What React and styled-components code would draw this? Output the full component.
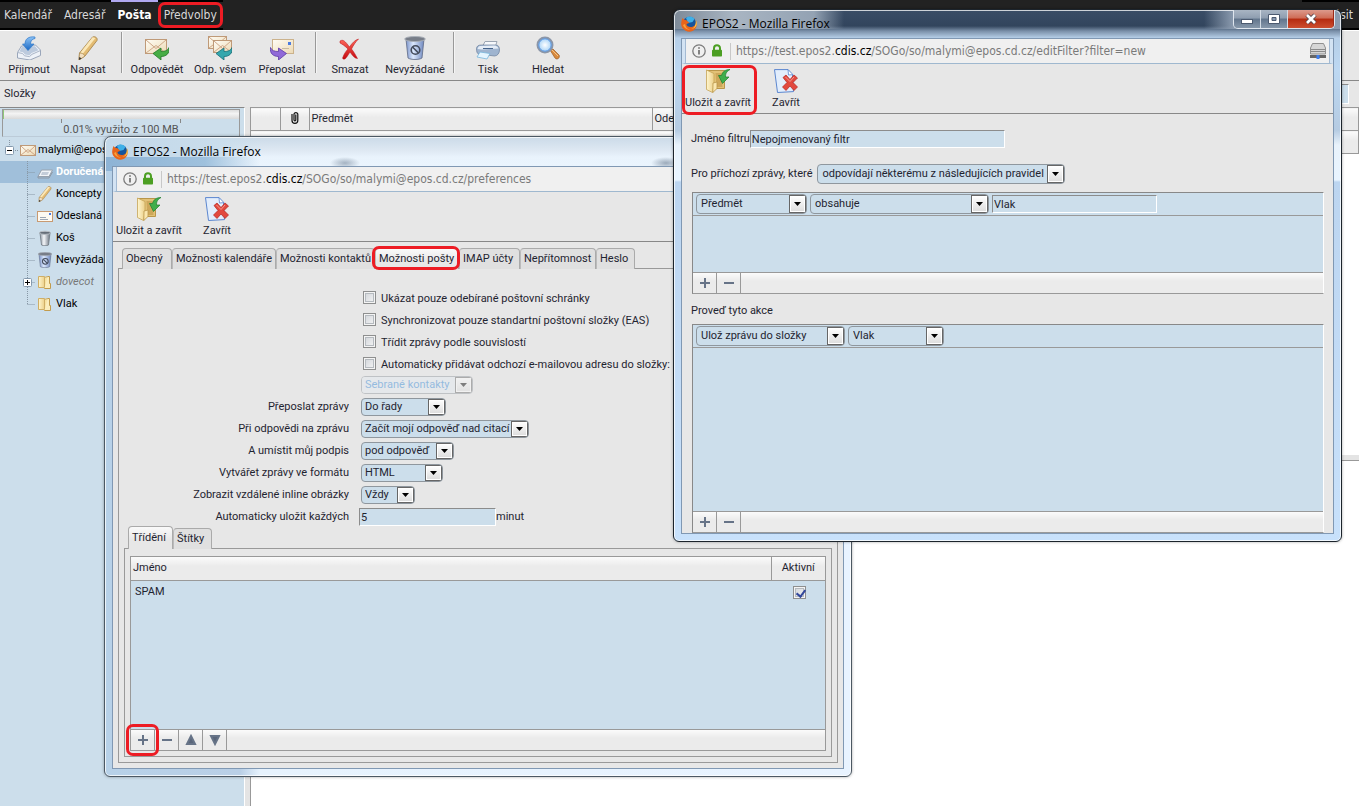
import styled, { createGlobalStyle, css } from "styled-components";

const GlobalStyle = createGlobalStyle`
* {
    box-sizing: border-box;
}
body {
    margin: 0;
    background: #fff;
    color: #1f2430;
    font-family: Roboto, sans-serif;
    font-size: 11px;
    line-height: 14px;
    overflow: hidden;
}
button, input, select {
    font: inherit;
    color: inherit;
    margin: 0;
    padding: 0;
}
`;

const redMark = css`
position: relative;

&::after {
    content: "";
    position: absolute;
    inset: ${props => props.$inset || "0"};
    border: 3px solid #ed1c24;
    border-radius: 7px;
    pointer-events: none;
}
`;

const bevel = css`
background: linear-gradient(#fbfbfb, #ebebeb 40%, #ebebeb);
`;

const sunken = css`
border: 1px solid;
border-color: #8c8c8c #fff #fff #8c8c8c;
background: #ccdeeb;
`;

/* ---------- main mail page ---------- */

const Page = styled.div`
position: relative;
display: flex;
flex-direction: column;
height: 100vh;
overflow: hidden;
`;

const TopBar = styled.nav`
display: flex;
justify-content: space-between;
height: 30px;
background: #222;
`;

const TopGroup = styled.div`
display: flex;
`;

const TopLink = styled.a`
display: block;
height: 30px;
padding: 0 6px;
border-top: 2px solid ${props => props.$active ? "#b0a8f0" : "#000"};
border-bottom: 2px solid #000;
color: ${props => props.$active ? "#fff" : "#d8d8d8"};
font-family: "DejaVu Sans Condensed", "DejaVu Sans", sans-serif;
font-stretch: condensed;
font-size: 12px;
font-weight: ${props => props.$active ? 700 : 400};
line-height: 27px;
text-decoration: none;
white-space: nowrap;

&:first-child {
    padding-left: 4px;
}
${props => props.$marked && redMark}
`;

const Toolbar = styled.div`
display: flex;
height: 50px;
border-bottom: 1px solid #888;
background: #e7e7e7;
`;

const MainToolbar = styled(Toolbar)`
height: 51px;
border-top: 1px solid #fff;
`;

const ToolButton = styled.button`
display: flex;
flex-direction: column;
align-items: center;
gap: 3px;
width: ${props => props.$width || 60}px;
padding-top: 5px;
border: none;
background: none;
white-space: nowrap;
cursor: pointer;
${props => props.$marked && redMark}
`;

const Separator = styled.div`
width: 2px;
height: 41px;
margin: 1px 3px 0;
border-left: 1px solid #999;
border-right: 1px solid #f5f5f5;
`;

const FolderBar = styled.div`
display: flex;
justify-content: space-between;
align-items: center;
height: 26px;
padding: 0 10px 0 4px;
background: #e7e7e7;
`;

const SearchInput = styled.input`
width: 180px;
height: 20px;
${sunken}
`;

const Content = styled.div`
display: flex;
flex: 1;
`;

const Sidebar = styled.aside`
width: 245px;
border-top: 1px solid #888;
border-right: 1px solid #fff;
background: #ccdeeb;
`;

const Splitter = styled.div`
width: 5px;
background: #e4e4e4;
`;

const Quota = styled.div`
margin: 1px 4px 0 2px;
height: 28px;
border: 1px solid #999;
border-bottom-color: #bccbd8;
color: #555;
text-align: center;
line-height: 13px;
`;

const QuotaBar = styled.div`
height: 9px;
border-left: 1px solid #8fc87a;
background: linear-gradient(#dcdcdc, #f4f4f4 40%, #d9d9d9);
`;

const QuotaTicks = styled.div`
display: flex;
justify-content: space-evenly;
height: 4px;

& > i {
    width: 1px;
    background: #888;
}
`;

const Tree = styled.ul`
margin: 2px 0 0;
padding: 0;
list-style: none;
`;

const TreeItem = styled.li`
display: flex;
align-items: center;
height: 22px;
padding-left: ${props => props.$root ? 5 : 23}px;
background: ${props => props.$selected ? "#a0bfda" : "none"};
`;

const TreeLink = styled.a`
display: flex;
align-items: center;
gap: ${props => props.$root ? 2 : 3}px;
color: ${props => props.$selected ? "#fff" : props.$muted ? "#777" : "#000"};
font-weight: ${props => props.$selected ? 700 : 400};
font-style: ${props => props.$muted ? "italic" : "normal"};
text-decoration: none;
white-space: nowrap;
`;

const ListArea = styled.main`
flex: 1;
display: flex;
flex-direction: column;
border-left: 1px solid #999;
background: #fff;
`;

const MessageTable = styled.table`
width: 100%;
table-layout: fixed;
border-collapse: collapse;

th {
    ${bevel}
    height: 23px;
    padding: 0 2px;
    border: 1px solid #999;
    border-left: none;
    font-weight: 400;
    text-align: left;
}
th:nth-child(2) {
    text-align: center;
}
`;

const MessageList = styled.div`
height: 301px;
`;

const ListSplitter = styled.div`
height: 6px;
border-bottom: 1px solid #999;
background: #e4e4e4;
`;

/* ---------- popup windows ---------- */

const darkGlass = `
linear-gradient(90deg, #7d8a98 0, #a9b5c2 60px, #93a2b3 140px, rgba(50, 69, 93, 0) 170px) 0 0 / 100% 19px no-repeat,
linear-gradient(90deg, rgba(50, 69, 93, 0) 530px, #8c9cb0 560px, #8c9cb0) 0 0 / 100% 19px no-repeat,
linear-gradient(#3a4d66, #32455d 16px, #7a8fa8 21px, #b6cfe8 28px, #bdd8f2 60px, #b5cbe2 120px, #e8f2fb 135px, #e8f4ff 170px, #bcd5f0 172px, #c8e1fb 100%)
`;

const lightGlass = `
radial-gradient(closest-side, rgba(60, 80, 105, 0.4), transparent) 225px 20px / 30px 12px no-repeat,
radial-gradient(closest-side, rgba(60, 80, 105, 0.45), transparent) 546px 20px / 30px 12px no-repeat,
linear-gradient(90deg, #c3d8e9 0, #c9ddec 110px, rgba(225, 236, 246, 0) 155px) 0 0 / 100% 20px no-repeat,
linear-gradient(90deg, #8db3d5 0, #9fc1dd 100px, rgba(225, 236, 246, 0) 155px) 0 20px / 100% 14px no-repeat,
linear-gradient(#cbdae8, #dfe9f3 14px, #e9f3fc 20px, #eaf4fd) 100px 0 / 100% 29px no-repeat,
linear-gradient(90deg, #b7d1e8 0, #b9cfe6 135px, #e6f2fd 155px, #e8f3ff 100%)
`;

const Window = styled.section`
position: absolute;
left: ${props => props.$left}px;
top: ${props => props.$top}px;
width: ${props => props.$width}px;
padding: 0 7px 7px;
border: 1px solid ${props => props.$dark ? "#1c242c" : "#4c5863"};
border-radius: 7px 7px 6px 6px;
box-shadow: inset 0 0 0 1px rgba(255, 255, 255, 0.75), 0 0 3px rgba(0, 0, 0, 0.35);
background: ${props => props.$dark ? darkGlass : lightGlass};
`;

const TitleBar = styled.header`
position: relative;
display: flex;
align-items: center;
gap: 5px;
height: ${props => props.$height}px;
color: #000;
font-family: "Open Sans", sans-serif;
font-size: 12px;
`;

const WindowControls = styled.div`
position: absolute;
top: 0;
right: -1px;
display: flex;
height: 19px;
border: 1px solid #dfe6ee;
border-top: none;
border-radius: 0 0 5px 5px;
overflow: hidden;
`;

const ControlButton = styled.button`
display: grid;
place-items: center;
width: ${props => props.$close ? 46 : 27}px;
border: none;
border-right: 1px solid ${props => props.$close ? "#9c2a18" : "#d3dbe4"};
background: ${props => props.$close
    ? "linear-gradient(#dc9a8c, #cf6b55 45%, #b52b10 50%, #cc4e30)"
    : "linear-gradient(#a9b5c3, #8e9db0 45%, #62758c 50%, #8798ab)"};
`;

const Client = styled.div`
border: 1px solid #8098b3;
background: #e7e7e7;
`;

const UrlBar = styled.div`
display: flex;
align-items: center;
height: 25px;
padding: 0 4px 0 7px;
border: solid #d3e3f3;
border-width: 0 3px;
border-bottom: 1px solid #9fb8cf;
box-shadow: inset 1px 0 #a3bad3, inset -1px 0 #a3bad3;
background: #f0f0f0;
color: #7a7a7a;
font-family: "DejaVu Sans Condensed", "DejaVu Sans", sans-serif;
font-stretch: condensed;
font-size: 12px;
white-space: nowrap;

b {
    color: #000;
    font-weight: 400;
}
svg:last-child {
    margin-left: auto;
}
`;

const UrlDivider = styled.span`
width: 1px;
height: 17px;
margin: 0 5px 0 4px;
background: #c8c8c8;
`;

const Tabs = styled.div`
display: flex;
align-items: flex-end;
padding: 6px 0 0 9px;
margin-bottom: -1px;
`;

const SubTabs = styled(Tabs)`
padding-top: 0;
`;

const Tab = styled.button`
height: ${props => props.$small && props.$active ? 23 : 21}px;
width: ${props => props.$width}px;
padding: 0 3px;
border: 1px solid #aaa;
border-bottom: none;
border-radius: 4px 4px 0 0;
background: ${props => props.$active ? "linear-gradient(#fafafa, #e7e7e7 60%)" : "#e0e0e0"};
text-align: left;
white-space: nowrap;
${props => props.$marked && redMark}

& + & {
    border-left-color: #bbb;
}
`;

const Panel = styled.div`
margin: 0 5px 5px;
padding: 17px 0 5px;
border: 1px solid #999;
`;

const Form = styled.form`
display: grid;
grid-template-columns: 230px 1fr;
grid-auto-rows: 22px;
align-items: center;
column-gap: 10px;
margin-bottom: -2px;
`;

const FormLabel = styled.label`
text-align: right;
`;

const FormField = styled.div`
grid-column: 2;
display: flex;
align-items: center;
padding-left: ${props => props.$indent || 0}px;
`;

const Check = styled.input`
appearance: none;
position: relative;
width: 13px;
height: 13px;
border: 1px solid #8e8f8f;
box-shadow: inset 0 0 0 1px #f4f4f4, inset 0 0 0 2px #b5babf;
background: linear-gradient(135deg, #cfd3d8, #f6f6f6);

&:checked::after {
    content: "";
    position: absolute;
    left: 4px;
    top: 1px;
    width: 4px;
    height: 7px;
    border: solid #32479b;
    border-width: 0 2px 2px 0;
    transform: rotate(38deg);
}
`;

const CheckLabel = styled.label`
padding: 3px 0 0 5px;
`;

const SelectBox = styled.span`
display: inline-grid;
width: ${props => props.$width}px;
height: ${props => props.$tall ? 20 : 18}px;
border: 1px solid #8f979e;
border-radius: 4px;
background: #ccdeeb;
opacity: ${props => props.$disabled ? 0.45 : 1};
overflow: hidden;
`;

const NativeSelect = styled.select`
grid-area: 1 / 1;
appearance: none;
width: 100%;
height: 100%;
padding: 0 17px 0 ${props => props.$tall ? 4 : 3}px;
border: none;
background: ${props => props.disabled ? "#e4ebf1" : "none"};
color: ${props => props.disabled ? "#2f86d6" : "#1f2430"};
opacity: 1;
outline: none;
`;

const SelectArrow = styled.span`
grid-area: 1 / 1;
justify-self: end;
display: grid;
place-items: center;
width: 17px;
border: 1px solid #666;
background: linear-gradient(#fff, #dcdcdc);
box-shadow: inset 0 0 0 1px #fff;
pointer-events: none;
`;

const TextInput = styled.input`
width: ${props => props.$width}px;
height: 18px;
padding: 0 1px;
outline: none;
${sunken}
`;

const InnerPanel = styled.div`
margin: 0 5px;
padding: 7px 5px 5px;
border: 1px solid #999;
`;

const ListBox = styled.div`
border: 1px solid #999;
background: #ccdeeb;
`;

const FilterTable = styled.table`
width: 100%;
border-collapse: collapse;
table-layout: fixed;

th {
    ${bevel}
    height: 23px;
    padding: 0 2px;
    border-bottom: 1px solid #999;
    font-weight: 400;
    text-align: left;
}
th:last-child {
    border-left: 1px solid #999;
    text-align: center;
}
td {
    height: 24px;
    padding: 0 4px;
}
td:last-child {
    padding: 4px 0 0 2px;
    text-align: center;
}
`;

const ListBody = styled.div`
height: 172px;
`;

const ListFooter = styled.div`
display: flex;
height: 21px;
border-top: 1px solid #999;
${bevel}
`;

const FooterButton = styled.button`
display: grid;
place-items: center;
width: 24px;
border: none;
border-right: 1px solid #999;
background: none;
${props => props.$marked && redMark}
`;

const FilterBody = styled.div`
padding: 16px 9px 0;
`;

const FilterRow = styled.div`
display: flex;
align-items: center;
gap: ${props => props.$gap}px;
margin-bottom: ${props => props.$bottom}px;
`;

const RuleBox = styled.div`
margin-left: 1px;
border: 1px solid;
border-color: #888 #fff #999 #888;
background: #ccdeeb;
`;

const RuleRow = styled.div`
display: flex;
align-items: center;
gap: 3px;
height: 23px;
padding: 0 3px;
border-bottom: 1px solid #999;
`;

const RuleSpace = styled.div`
height: ${props => props.$height}px;
`;

const ActionTitle = styled.h2`
margin: 10px 0 6px;
font-size: 11px;
font-weight: 400;
line-height: 14px;
`;

/* ---------- icons ---------- */

const Defs = () => (
    <svg width="0" height="0" style={{ position: "absolute" }} aria-hidden="true">
        <defs>
            <linearGradient id="blue" x2="0" y2="1"><stop stopColor="#8ec4f6" /><stop offset="1" stopColor="#1766c4" /></linearGradient>
            <linearGradient id="paper" x2="1" y2="1"><stop stopColor="#fffdf6" /><stop offset="1" stopColor="#ecd9b4" /></linearGradient>
            <linearGradient id="gold" x2="1" y2="0"><stop stopColor="#fff6cf" /><stop offset="1" stopColor="#ecd08a" /></linearGradient>
            <linearGradient id="steel" x2="1" y2="0"><stop stopColor="#8f98a3" /><stop offset=".4" stopColor="#f4f6f9" /><stop offset="1" stopColor="#69727e" /></linearGradient>
            <linearGradient id="bin" x2="1" y2="0"><stop stopColor="#7b93c9" /><stop offset=".4" stopColor="#dbe8fd" /><stop offset="1" stopColor="#6f88bf" /></linearGradient>
            <linearGradient id="red" x2="0" y2="1"><stop stopColor="#ff6a5c" /><stop offset="1" stopColor="#c4090f" /></linearGradient>
            <radialGradient id="lens"><stop stopColor="#fff" /><stop offset="1" stopColor="#9ccdf6" /></radialGradient>
        </defs>
    </svg>
);

const ReceiveIcon = () => (
    <svg width="24" height="24" viewBox="0 0 24 24">
        <path d="M4.500 10L.500 16.500V22L13 24l10.500-4.500V14L18.500 9z" fill="#eef2f8" stroke="#9aa6ba" />
        <path d="M5 10.500L2.500 15.500l3.500.700 2 2.300 4.500.700 2-2.200 7-2.700-3.500-4z" fill="#bccadd" />
        <path d="M.500 16.500l5 1 2 2.300 5 .8 2.500-2.300 8.500-3.800" fill="none" stroke="#aab5c7" />
        <path d="M18 1c-7-1-10 2.500-10 7H5.500l5.500 6.500L17 8h-3.500c0-3 1.500-5 4.500-5.500z" fill="url(#blue)" stroke="#2f78c8" strokeWidth=".7" />
    </svg>
);

const PencilIcon = ({ size = 24 }) => (
    <svg width={size} height={size} viewBox="0 0 24 24">
        <path d="M16.500 1c2-1 5.500.500 4.500 3.500L9 20l-6 4 .500-7z" fill="#e3bb72" stroke="#a07f48" strokeWidth=".8" />
        <path d="M16.500 1.200L4.500 16.500l2.300 1.200L19.500 2z" fill="#fbe8b8" />
        <path d="M3.500 17L3 24l6-4c-1-2-3-3-5.500-3z" fill="#f2dfc0" stroke="#a07f48" strokeWidth=".6" />
        <path d="M3.200 21L3 24l2.600-1.700z" fill="#333" />
    </svg>
);

const Envelope = ({ x = 0, y = 0, w = 22, h = 15 }) => (
    <g transform={`translate(${x} ${y})`}>
        <rect x=".5" y=".5" width={w - 1} height={h - 1} fill="url(#paper)" stroke="#bf9a78" />
        <path d={`M1 ${h - 1}L${w / 2} ${h / 2 - 1} ${w - 1} ${h - 1}M1 1l${w / 2 - 1} ${h / 2 + 1} ${w / 2 - 1}-${h / 2 + 1}`} fill="none" stroke="#cfa888" />
    </g>
);

const replyArrow = "M24 11.500c1 6-3 9-8 9v3.500l-8-6.500 8-5.500v3.500c4 0 7-1 8-4z";

const ReplyIcon = () => (
    <svg width="24" height="24" viewBox="0 0 24 24">
        <Envelope y={3} />
        <path d={replyArrow} fill="#47ad45" stroke="#24782a" strokeWidth=".8" />
    </svg>
);

const ReplyAllIcon = () => (
    <svg width="24" height="24" viewBox="0 0 24 24">
        <Envelope w={19} h={13} />
        <Envelope x={5} y={4} w={19} h={13} />
        <path d={replyArrow} fill="#35a7ad" stroke="#176d78" strokeWidth=".8" />
    </svg>
);

const ForwardIcon = () => (
    <svg width="24" height="24" viewBox="0 0 24 24">
        <rect x="2.500" y="3.500" width="21" height="14" fill="url(#paper)" stroke="#cbb28c" />
        <rect x="18" y="6" width="3" height="3" fill="#4b7be0" />
        <path d="M12 12.500h7" stroke="#c9b9a0" />
        <path d="M.500 11.500c-1 6 3 9 8 9V24l8-6.500-8-5.500v3.500c-4 0-7-1-8-4z" fill="#9069d8" stroke="#5b38a4" strokeWidth=".8" />
    </svg>
);

const DeleteIcon = () => (
    <svg width="24" height="24" viewBox="0 0 24 24">
        <path d="M2 5c3-2 5 0 9.500 6C14 7 17 4 20.500 3c-3 3-5 6-7 10 2.500 3 4 6 6 9.500-3 0-5-3-7.500-6.500-2 3-3 5-5 7-2 .5-3-.5-2-2 1-3 3-6 5-8C7 10 4 8 2 7z" fill="url(#red)" stroke="#b80d12" strokeWidth=".5" />
    </svg>
);

const JunkIcon = ({ size = 24 }) => (
    <svg width={size} height={size} viewBox="0 0 24 24">
        <path d="M3 3l2 19c3 2 11 2 14 0l2-19z" fill="url(#bin)" stroke="#5e6a85" strokeWidth=".8" />
        <ellipse cx="12" cy="3" rx="10.300" ry="2.500" fill="#777d88" stroke="#a9afb8" />
        <circle cx="12.500" cy="14" r="4.300" fill="none" stroke="#434b5c" strokeWidth="1.600" />
        <path d="M9.500 11l6 6" stroke="#434b5c" strokeWidth="1.600" />
    </svg>
);

const PrintIcon = () => (
    <svg width="24" height="24" viewBox="0 0 24 24">
        <path d="M9 5.500h12l-2 6H6z" fill="#f6f8fb" stroke="#9ba5b3" />
        <path d="M.500 13c0-3 2-4 5-4h14c3 0 4 2 4 5s-2 6-5 6L3 18c-2 0-2.500-3-2.500-5z" fill="#9fb4cf" stroke="#6b7f9c" strokeWidth=".7" />
        <path d="M4 10l14-.5c3 0 4 2 4.500 3L6 13.500 1.500 13c.500-2 1.500-3 2.500-3z" fill="#e4ecf6" />
        <path d="M7 12.500h10" stroke="#46648c" />
        <path d="M4 16l10 1.500-3 5.500-10-2z" fill="#e4f5ff" stroke="#78b6dc" strokeWidth=".8" />
    </svg>
);

const SearchIcon = () => (
    <svg width="24" height="24" viewBox="0 0 24 24">
        <path d="M14 14l3-1 6 6c1 1 0 4-2 4-1 0-1.500-.500-2-1z" fill="#d98a3e" stroke="#9c5f2a" strokeWidth=".7" />
        <path d="M16 14l6 6" stroke="#f4c48a" />
        <circle cx="9" cy="9" r="7.500" fill="url(#lens)" stroke="#8b96a8" strokeWidth="2" />
        <circle cx="9" cy="9" r="6.200" fill="none" stroke="#4f8fe0" strokeWidth=".9" />
    </svg>
);

const SaveCloseIcon = () => (
    <svg width="24" height="24" viewBox="0 0 24 24">
        <path d="M1 1.500h17.500v18H8z" fill="#e2c176" stroke="#b9964a" />
        <path d="M9.500 4h6l1 14h-6z" fill="#cda75a" />
        <path d="M.500 1L8 4.500V16l-1.500 7.500L.500 20.500z" fill="url(#gold)" stroke="#c5a355" strokeWidth=".8" />
        <path d="M7 14l4-1v6.500L6.800 23.500z" fill="#fbe7ae" stroke="#b9964a" strokeWidth=".8" />
        <path d="M24 .500c-3.500 2-4.500 4-4.500 7.500h3.500l-6.500 6.500-4-8h3c1-4 4-6 8.500-6z" fill="#3fae4b" stroke="#1f7d2c" strokeWidth=".7" />
    </svg>
);

const CloseDocIcon = () => (
    <svg width="24" height="24" viewBox="0 0 24 24">
        <path d="M.500 .600h13.500l4.500 5 1 17L3.500 23.500z" fill="#e3eefc" stroke="#5b86cf" />
        <path d="M14 .600l.500 5.400 4.500-.400z" fill="#fff" stroke="#5b86cf" strokeWidth=".8" />
        <path d="M9 8.500l3-2.500 4 4.500L20 6l3.500 3-4.500 4.500 4.500 4.500-3.500 3.500-4-4.500-4 4.500L8.500 18l4.500-4.500z" fill="#e2493f" stroke="#b3241f" strokeWidth=".7" />
        <path d="M11.500 8l4.500 4.500L20 8" fill="none" stroke="#f79a90" />
    </svg>
);

const FirefoxIcon = () => (
    <svg width="16" height="16" viewBox="0 0 16 16">
        <circle cx="8.500" cy="7.500" r="6.800" fill="#16549c" />
        <path d="M5 2c3-2.500 7-1.500 8.500 1l-2 3L7 7z" fill="#3fb0e8" />
        <path d="M1.500 2C0 6-.500 9 1.500 12c3 4.500 9.500 5 12.500 1 2-2.500 2.200-6 1-8.500.300 4-1.500 6-4 6.500C8 11.500 5.500 10 5.500 8L8 7c.5-1-1.500-1.300-2-2.500C4 4 2.500 3.500 1.500 2z" fill="#e8641b" />
        <path d="M14.500 4c1 4-.500 8-4.500 9 3-.3 5.500-2 5.700-5 .1-1.500-.500-3-1.200-4z" fill="#fbd24a" />
        <path d="M2 9c1 3 4 5 7 4.600C6 13 4.500 11 4 8z" fill="#f8a13a" />
    </svg>
);

const InfoIcon = () => (
    <svg width="14" height="14" viewBox="0 0 14 14">
        <circle cx="7" cy="7" r="6.200" fill="none" stroke="#7c7c7c" strokeWidth="1.300" />
        <path d="M7 6v4.500M7 3.200v1.600" stroke="#777" strokeWidth="1.800" />
    </svg>
);

const LockIcon = () => (
    <svg width="20" height="14" viewBox="0 0 20 14">
        <path d="M8 7V4.200a3 3 0 016 0V7" fill="none" stroke="#4c9f23" strokeWidth="2" />
        <rect x="6" y="5.800" width="10" height="6.700" rx=".8" fill="#4c9f23" />
    </svg>
);

const ServerIcon = () => (
    <svg width="16" height="16" viewBox="0 0 16 16">
        <path d="M2.500.500h11l2 4.500v6h-15V5z" fill="#d6d6d6" stroke="#909090" />
        <path d="M1 6.500h14M1 8.500h14" stroke="#8a8a8a" />
        <path d="M0 13.500h16" stroke="#666" strokeWidth="3" />
        <rect x="6.500" y="12" width="3" height="4" fill="#3f7ff0" />
    </svg>
);

const ClipIcon = () => (
    <svg width="8" height="13" viewBox="0 0 8 13">
        <path d="M1 3v6.500a2.800 2.800 0 005.800 0V3a2 2 0 00-3.800 0v6a.9.900 0 001.800 0V3.500" fill="none" stroke="#111" strokeWidth="1.200" />
    </svg>
);

const Branch = ({ last, toggle }) => (
    <svg width="14" height="22" viewBox="0 0 14 22">
        <path d={last ? "M4.500 0v11" : "M4.500 0v22"} stroke="#8797a5" strokeDasharray="1 1" />
        <path d="M4.500 11.500h7" stroke="#8797a5" strokeDasharray="1 1" />
        {toggle && <rect x=".500" y="7.500" width="8" height="8" rx="1" fill="#fff" stroke="#8499ad" />}
        {toggle && <path d="M2 11.500h5M4.500 9v5" stroke="#000" />}
    </svg>
);

const RootToggle = () => (
    <svg width="15" height="22" viewBox="0 0 15 22">
        <path d="M4.500 1v6M10 11.500h3" stroke="#8797a5" strokeDasharray="1 1" />
        <rect x=".500" y="7.500" width="8" height="8" rx="1" fill="#fff" stroke="#8499ad" />
        <path d="M2 11.500h5" stroke="#000" />
    </svg>
);

const MailIcon = () => (
    <svg width="16" height="16" viewBox="0 0 16 16">
        <Envelope y={3} w={16} h={11} />
    </svg>
);

const InboxIcon = () => (
    <svg width="16" height="16" viewBox="0 0 16 16">
        <path d="M4.500 6h11l-3.500 6.500H1z" fill="#f1f4f8" stroke="#98a2ae" />
        <path d="M5 8h7l-1.500 3H4z" fill="#c3ccd8" />
        <path d="M1 12.500v1.500h11l3.500-6" fill="none" stroke="#8d97a3" />
    </svg>
);

const SentIcon = () => (
    <svg width="16" height="16" viewBox="0 0 16 16">
        <rect x=".500" y="3.500" width="15" height="10" fill="#fdfaf2" stroke="#c89a72" />
        <path d="M3 9.500h6M3 11.500h8" stroke="#9da7b5" />
        <rect x="12" y="5" width="2" height="2" fill="#4b7be0" />
    </svg>
);

const BinIcon = () => (
    <svg width="16" height="16" viewBox="0 0 16 16">
        <path d="M3 3l1.500 12c2 1 5 1 7 0L13 3z" fill="url(#steel)" stroke="#6f7780" strokeWidth=".8" />
        <ellipse cx="8" cy="2.800" rx="5.500" ry="1.600" fill="#666e78" stroke="#b9bfc6" />
    </svg>
);

const FolderIcon = () => (
    <svg width="16" height="16" viewBox="0 0 16 16">
        <path d="M1.500 2.500h6v11h-6z" fill="url(#gold)" stroke="#cfae66" />
        <path d="M7.500 3.500l3-1v12h-3z" fill="#f7e2a2" stroke="#cfae66" />
        <path d="M10.500 2.500h2v7h1v5h-6" fill="#fbedbd" stroke="#c19b4d" />
    </svg>
);

const DownArrow = () => (
    <svg width="7" height="4" viewBox="0 0 7 4"><path d="M0 0h7L3.500 4z" fill="#000" /></svg>
);

const glyphs = {
    plus: "M6 1v10M1 6h10",
    minus: "M1 6h10",
    up: "M6 2L10 10H2z",
    down: "M6 10L10 2H2z",
};

const Glyph = ({ name }) => (
    <svg width="12" height="12" viewBox="0 0 12 12">
        <path d={glyphs[name]} fill="#59657a" stroke="#667387" strokeWidth="2" />
    </svg>
);

/* ---------- parts ---------- */

const Select = ({ id, label, value, width, tall, disabled }) => (
    <SelectBox $width={width} $tall={tall} $disabled={disabled}>
        <NativeSelect id={id} aria-label={label} disabled={disabled} $tall={tall}>
            <option>{value}</option>
        </NativeSelect>
        <SelectArrow><DownArrow /></SelectArrow>
    </SelectBox>
);

const Tool = ({ icon, text, ...rest }) => (
    <ToolButton type="button" {...rest}>
        {icon}
        <span>{text}</span>
    </ToolButton>
);

const Footer = ({ items, marked }) => (
    <ListFooter>
        {items.map(name => (
            <FooterButton
                key={name}
                type="button"
                aria-label={name}
                $marked={marked === name}
                $inset="-6px -5px -6px -5px"
            >
                <Glyph name={name} />
            </FooterButton>
        ))}
    </ListFooter>
);

const BrowserWindow = ({ left, top, width, titleHeight, dark, path, children }) => (
    <Window $left={left} $top={top} $width={width} $dark={dark}>
        <TitleBar $height={titleHeight}>
            <FirefoxIcon />
            <span>EPOS2 - Mozilla Firefox</span>
            {dark && (
                <WindowControls>
                    <ControlButton type="button" aria-label="Minimalizovat">
                        <svg width="12" height="12" viewBox="0 0 12 12"><rect x=".500" y="6.500" width="11" height="4" fill="#fff" stroke="#4c5a70" /></svg>
                    </ControlButton>
                    <ControlButton type="button" aria-label="Maximalizovat">
                        <svg width="12" height="12" viewBox="0 0 12 12">
                            <path d="M.500 1.500h11v9H.500z" fill="#fff" stroke="#4c5a70" />
                            <path d="M4 4.500h4v3H4z" fill="#8a9ab0" stroke="#4c5a70" />
                        </svg>
                    </ControlButton>
                    <ControlButton type="button" aria-label="Zavřít okno" $close>
                        <svg width="12" height="12" viewBox="0 0 12 12">
                            <path d="M2 2l8 8M10 2l-8 8" stroke="#53424a" strokeWidth="4.500" />
                            <path d="M2 2l8 8M10 2l-8 8" stroke="#fff" strokeWidth="2.700" />
                        </svg>
                    </ControlButton>
                </WindowControls>
            )}
        </TitleBar>
        <Client>
            <UrlBar>
                <InfoIcon />
                <LockIcon />
                <UrlDivider />
                <span>https://test.epos2.<b>cdis.cz</b>/SOGo/so/malymi@epos.cd.cz/{path}</span>
                {dark && <ServerIcon />}
            </UrlBar>
            <Toolbar>
                <Tool icon={<SaveCloseIcon />} text="Uložit a zavřít" $width={72} $marked={dark} $inset="1px -3px -2px 0" />
                <Tool icon={<CloseDocIcon />} text="Zavřít" $width={64} />
            </Toolbar>
            {children}
        </Client>
    </Window>
);

const folders = [
    { name: "Doručená", icon: <InboxIcon />, selected: true },
    { name: "Koncepty", icon: <PencilIcon size={16} /> },
    { name: "Odeslaná", icon: <SentIcon /> },
    { name: "Koš", icon: <BinIcon /> },
    { name: "Nevyžádaná", icon: <JunkIcon size={16} /> },
    { name: "dovecot", icon: <FolderIcon />, muted: true, toggle: true },
    { name: "Vlak", icon: <FolderIcon />, last: true },
];

const checks = [
    "Ukázat pouze odebírané poštovní schránky",
    "Synchronizovat pouze standartní poštovní složky (EAS)",
    "Třídit zprávy podle souvislostí",
    "Automaticky přidávat odchozí e-mailovou adresu do složky:",
];

const choices = [
    { id: "forward", label: "Přeposlat zprávy", value: "Do řady", width: 85 },
    { id: "reply", label: "Při odpovědi na zprávu", value: "Začít mojí odpověď nad citací", width: 168 },
    { id: "signature", label: "A umístit můj podpis", value: "pod odpověď", width: 93 },
    { id: "format", label: "Vytvářet zprávy ve formátu", value: "HTML", width: 82 },
    { id: "images", label: "Zobrazit vzdálené inline obrázky", value: "Vždy", width: 54 },
];

const tabs = [
    ["Obecný", 50],
    ["Možnosti kalendáře", 104],
    ["Možnosti kontaktů", 99],
    ["Možnosti pošty", 84],
    ["IMAP účty", 61],
    ["Nepřítomnost", 76],
    ["Heslo", 39],
];

const Preferences = () => (
    <BrowserWindow left={104} top={136} width={748} titleHeight={29} path="preferences">
        <Tabs>
            {tabs.map(([name, width]) => (
                <Tab
                    key={name}
                    type="button"
                    $width={width}
                    $active={name === "Možnosti pošty"}
                    $marked={name === "Možnosti pošty"}
                    $inset="-3px -2px -1px -4px"
                >
                    {name}
                </Tab>
            ))}
        </Tabs>
        <Panel>
            <Form>
                {checks.map((text, i) => (
                    <FormField key={text} $indent={4}>
                        <Check type="checkbox" id={`check${i}`} />
                        <CheckLabel htmlFor={`check${i}`}>{text}</CheckLabel>
                    </FormField>
                ))}
                <FormField $indent={2}>
                    <Select label="Složka kontaktů" value="Sebrané kontakty" width={112} disabled />
                </FormField>
                {choices.map(({ id, label, value, width }) => [
                    <FormLabel key={`${id}-label`} htmlFor={id}>{label}</FormLabel>,
                    <FormField key={id} $indent={2}>
                        <Select id={id} value={value} width={width} />
                    </FormField>,
                ])}
                <FormLabel htmlFor="autosave">Automaticky uložit každých</FormLabel>
                <FormField>
                    <TextInput id="autosave" type="text" defaultValue="5" $width={137} />
                    <span>minut</span>
                </FormField>
            </Form>
            <SubTabs>
                <Tab type="button" $small $active $width={45}>Třídění</Tab>
                <Tab type="button" $small $width={39}>Štítky</Tab>
            </SubTabs>
            <InnerPanel>
                <ListBox>
                    <ListBody>
                        <FilterTable>
                            <colgroup>
                                <col />
                                <col width="54" />
                            </colgroup>
                            <thead>
                                <tr>
                                    <th>Jméno</th>
                                    <th>Aktivní</th>
                                </tr>
                            </thead>
                            <tbody>
                                <tr>
                                    <td>SPAM</td>
                                    <td><Check type="checkbox" aria-label="Aktivní" defaultChecked /></td>
                                </tr>
                            </tbody>
                        </FilterTable>
                    </ListBody>
                    <Footer items={["plus", "minus", "up", "down"]} marked="plus" />
                </ListBox>
            </InnerPanel>
        </Panel>
    </BrowserWindow>
);

const FilterEditor = () => (
    <BrowserWindow left={673} top={9} width={669} titleHeight={28} dark path="editFilter?filter=new">
        <FilterBody>
            <FilterRow $gap={0} $bottom={16}>
                <label htmlFor="filterName">Jméno filtru</label>
                <TextInput id="filterName" type="text" defaultValue="Nepojmenovaný filtr" $width={255} />
            </FilterRow>
            <FilterRow $gap={5} $bottom={8}>
                <label htmlFor="match">Pro příchozí zprávy, které</label>
                <Select id="match" value="odpovídají některému z následujících pravidel" width={248} tall />
            </FilterRow>
            <RuleBox>
                <RuleRow>
                    <Select label="Pole" value="Předmět" width={111} tall />
                    <Select label="Operátor" value="obsahuje" width={179} tall />
                    <TextInput type="text" aria-label="Hodnota" defaultValue="Vlak" $width={165} />
                </RuleRow>
                <RuleSpace $height={56} />
                <Footer items={["plus", "minus"]} />
            </RuleBox>
            <ActionTitle>Proveď tyto akce</ActionTitle>
            <RuleBox>
                <RuleRow>
                    <Select label="Akce" value="Ulož zprávu do složky" width={149} tall />
                    <Select label="Složka" value="Vlak" width={96} tall />
                </RuleRow>
                <RuleSpace $height={163} />
                <Footer items={["plus", "minus"]} />
            </RuleBox>
        </FilterBody>
    </BrowserWindow>
);

const App = () => {
    return (
        <Page>
            <GlobalStyle />
            <Defs />
            <TopBar>
                <TopGroup>
                    <TopLink href="#kalendar">Kalendář</TopLink>
                    <TopLink href="#adresar">Adresář</TopLink>
                    <TopLink href="#posta" $active>Pošta</TopLink>
                    <TopLink href="#predvolby" $marked $inset="0 0 0 0">Předvolby</TopLink>
                </TopGroup>
                <TopLink href="#odhlasit">Odhlásit</TopLink>
            </TopBar>
            <MainToolbar>
                <Tool icon={<ReceiveIcon />} text="Přijmout" $width={58} />
                <Tool icon={<PencilIcon />} text="Napsat" />
                <Separator />
                <Tool icon={<ReplyIcon />} text="Odpovědět" $width={62} />
                <Tool icon={<ReplyAllIcon />} text="Odp. všem" $width={64} />
                <Tool icon={<ForwardIcon />} text="Přeposlat" />
                <Separator />
                <Tool icon={<DeleteIcon />} text="Smazat" />
                <Tool icon={<JunkIcon />} text="Nevyžádané" $width={70} />
                <Separator />
                <Tool icon={<PrintIcon />} text="Tisk" />
                <Tool icon={<SearchIcon />} text="Hledat" />
            </MainToolbar>
            <FolderBar>
                <span>Složky</span>
                <SearchInput type="text" aria-label="Hledat ve zprávách" />
            </FolderBar>
            <Content>
                <Sidebar>
                    <Quota>
                        <QuotaBar />
                        <QuotaTicks><i /><i /><i /></QuotaTicks>
                        0.01% využito z 100 MB
                    </Quota>
                    <Tree>
                        <TreeItem $root>
                            <RootToggle />
                            <TreeLink href="#ucet" $root><MailIcon />malymi@epos</TreeLink>
                        </TreeItem>
                        {folders.map(({ name, icon, selected, muted, toggle, last }) => (
                            <TreeItem key={name} $selected={selected}>
                                <Branch last={last} toggle={toggle} />
                                <TreeLink href={`#${name}`} $selected={selected} $muted={muted}>{icon}{name}</TreeLink>
                            </TreeItem>
                        ))}
                    </Tree>
                </Sidebar>
                <Splitter />
                <ListArea>
                    <MessageTable>
                        <colgroup>
                            <col width="29" />
                            <col width="29" />
                            <col width="343" />
                            <col />
                        </colgroup>
                        <thead>
                            <tr>
                                <th></th>
                                <th><ClipIcon /></th>
                                <th>Předmět</th>
                                <th>Odesílatel</th>
                            </tr>
                            <tr>
                                <th colSpan="4"></th>
                            </tr>
                        </thead>
                    </MessageTable>
                    <MessageList />
                    <ListSplitter />
                </ListArea>
            </Content>
            <Preferences />
            <FilterEditor />
        </Page>
    );
};

export default App;
